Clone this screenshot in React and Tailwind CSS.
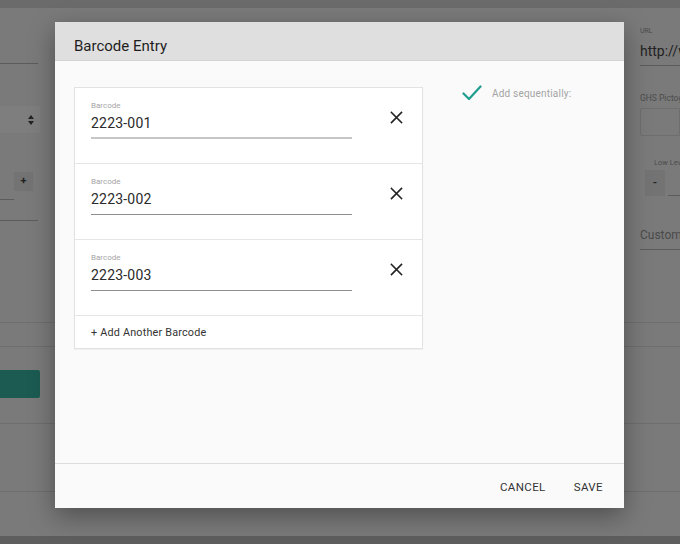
import React, { useState } from 'react';

const font = { fontFamily: 'Roboto, "Liberation Sans", sans-serif' };

const CloseIcon = () => (
  <svg width="13" height="13" viewBox="0 0 13 13" fill="none" stroke="#222" strokeWidth="1.6" strokeLinecap="square">
    <path d="M1.5 1.5 L11.5 11.5 M11.5 1.5 L1.5 11.5" />
  </svg>
);

const CheckIcon = () => (
  <svg width="20" height="16" viewBox="0 0 20 16" fill="none" stroke="#1f9d8f" strokeWidth="2.2" strokeLinecap="round" strokeLinejoin="round">
    <path d="M1.5 8.5 L7 14 L18.5 1.5" />
  </svg>
);

const SelectArrows = () => (
  <svg width="6" height="10" viewBox="0 0 6 10" fill="#222">
    <path d="M3 0 L6 4 L0 4 Z M0 6 L6 6 L3 10 Z" />
  </svg>
);

const BarcodeRow = ({ value, focused }) => (
  <div className="h-[76px] border-b border-[#e6e6e6] flex pl-[16px] pr-[19px]">
    <div className="w-[261px] pt-[13px]">
      <div className="text-[8px] leading-[10px] text-[#a5a5a5]">Barcode</div>
      <div className="mt-[3px] text-[14px] leading-[18px] text-[#2a2a2a] tracking-[0.2px]">{value}</div>
      <div className={focused ? 'mt-[5px] h-[2px] bg-[#c6c6c6]' : 'mt-[6px] h-px bg-[#8e8e8e]'} />
    </div>
    <div className="flex-1 flex justify-end pt-[23px]">
      <CloseIcon />
    </div>
  </div>
);

const BarcodeModal = () => {
  const [codes] = useState(['2223-001', '2223-002', '2223-003']);
  return (
    <div className="absolute left-[55px] top-[22px] w-[569px] h-[486px] bg-[#fafafa] flex flex-col shadow-[0_8px_24px_rgba(0,0,0,0.35)]" style={font}>
      <div className="h-[39px] bg-[#dfdfdf] border-b border-[#d2d2d2] flex items-center pl-[19px] pt-[10px]">
        <span className="text-[15px] text-[#1e1e1e]">Barcode Entry</span>
      </div>
      <div className="flex-1 flex pl-[19px] pt-[26px] border-b border-[#dcdcdc]">
        <div className="w-[349px] self-start bg-white border border-[#e2e2e2] shadow-[0_1px_1px_rgba(0,0,0,0.04)]">
          {codes.map((c, i) => (
            <BarcodeRow key={c} value={c} focused={i === 0} />
          ))}
          <div className="h-[32px] flex items-center pl-[16px] pt-[3px] text-[10.8px] text-[#333] tracking-[0.2px]">
            + Add Another Barcode
          </div>
        </div>
        <div className="ml-[39px] flex items-start gap-[10px] -mt-[2px]">
          <CheckIcon />
          <span className="text-[10px] text-[#a4a4a4] pt-[1px] tracking-[0.2px]">Add sequentially:</span>
        </div>
      </div>
      <div className="h-[44px] flex items-center justify-end pr-[21px] pt-[3px] gap-[28px] text-[11.5px] text-[#333] tracking-[0.4px]">
        <button>CANCEL</button>
        <button>SAVE</button>
      </div>
    </div>
  );
};

export default function App() {
  return (
    <div className="relative w-[680px] h-[544px] overflow-hidden bg-[#7a7a7a] flex flex-col" style={font}>
      <div className="h-[8px] bg-[#6b6b6b] shrink-0" />
      {/* dimmed form behind the dialog */}
      <div className="h-[314px] flex justify-between shrink-0">
        <div className="w-[40px] flex flex-col">
          <div className="mt-[55px] h-px bg-[#5c5c5c] w-[38px]" />
          <div className="mt-[42px] h-[27px] w-[40px] bg-[#7e7e7e] flex items-center justify-end pr-[6px]">
            <SelectArrows />
          </div>
          <div className="mt-[39px] flex items-start">
            <div className="mt-[27px] w-[14px] h-px bg-[#5c5c5c]" />
            <div className="w-[19px] h-[19px] bg-[#737373] flex items-center justify-center text-[11px] text-[#222] font-bold">+</div>
          </div>
          <div className="mt-[20px] h-px bg-[#5c5c5c] w-[38px]" />
        </div>
        <div className="w-[40px] flex flex-col">
          <div className="mt-[19px] text-[7px] text-[#4c4c4c] leading-[8px]">URL</div>
          <div className="mt-[8px] text-[14px] leading-[16px] text-[#222] whitespace-nowrap">http://www</div>
          <div className="mt-[6px] h-px bg-[#5c5c5c]" />
          <div className="mt-[27px] text-[8.5px] text-[#4c4c4c] whitespace-nowrap leading-[10px]">GHS Pictograms</div>
          <div className="mt-[5px] h-[28px] border border-[#6e6e6e] rounded-l-[2px]" />
          <div className="mt-[22px] ml-[14px] text-[7.5px] text-[#4c4c4c] whitespace-nowrap leading-[9px]">Low Level</div>
          <div className="mt-[3px] flex items-end">
            <div className="ml-[5px] w-[20px] h-[26px] bg-[#737373] flex items-center justify-center text-[11px] text-[#222] font-bold">-</div>
            <div className="ml-[3px] flex-1 h-px bg-[#5c5c5c]" />
          </div>
          <div className="mt-[32px] text-[12px] leading-[14px] text-[#4a4a4a] whitespace-nowrap">Custom</div>
          <div className="mt-[7px] h-px bg-[#5c5c5c]" />
        </div>
      </div>
      <div className="h-px bg-[#6e6e6e] shrink-0" />
      <div className="h-[23px] shrink-0" />
      <div className="h-px bg-[#6e6e6e] shrink-0" />
      <div className="h-[23px] shrink-0" />
      <div className="h-[28px] w-[40px] bg-[#1b5b52] rounded-r-[2px] shrink-0" />
      <div className="h-[25px] shrink-0" />
      <div className="h-px bg-[#6e6e6e] shrink-0" />
      <div className="h-[67px] shrink-0" />
      <div className="h-px bg-[#6e6e6e] shrink-0" />
      <div className="flex-1" />
      <div className="h-[8px] bg-[#5e5e5e] shrink-0" />
      <BarcodeModal />
    </div>
  );
}
